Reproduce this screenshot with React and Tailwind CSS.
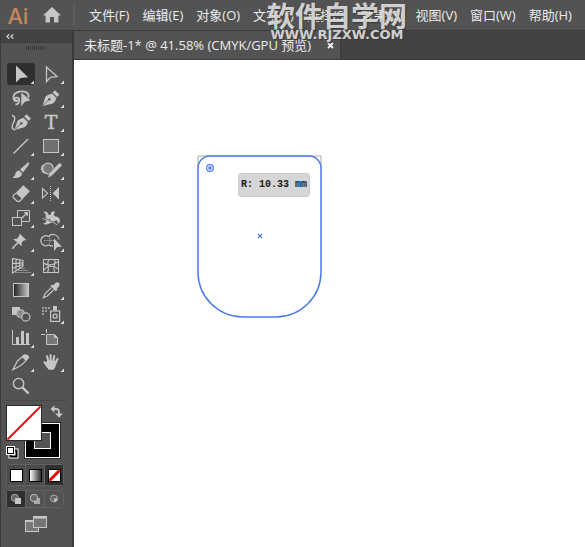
import React, { useState } from "react";

const INK = "#c6c6c6";

const menus = ["文件(F)", "编辑(E)", "对象(O)", "文字(T)", "选择(S)", "效果(C)", "视图(V)", "窗口(W)", "帮助(H)"];

const tools = [
  {
    id: "选择工具",
    more: true,
    art: <path fill={INK} d="M10 3.5V20.5L14.5 16L22 15.2Z" />,
  },
  {
    id: "直接选择工具",
    more: true,
    art: <path fill="none" stroke={INK} strokeWidth="1.3" d="M10.5 5V19.5L14.5 15.3L21 14.6Z" />,
  },
  {
    id: "套索工具",
    art: (
      <>
        <path
          fill="none"
          stroke={INK}
          strokeWidth="1.8"
          d="M9.5 18.5C13 18.5 14 15 13 12.8C12 11 8.6 11.4 8.6 13.4C8.6 15.4 11.6 15.6 11.6 13.6M8.8 15.2C6.5 12 7 8 11 6.3C16 4.3 22 5.4 22.6 9.3C22.8 10.5 22.3 11.3 21.8 12"
        />
        <path fill={INK} stroke="#535353" strokeWidth="0.6" d="M15 6V21L19 16L25 14.6Z" />
      </>
    ),
  },
  {
    id: "钢笔工具",
    more: true,
    art: (
      <>
        <path fill={INK} d="M6.5 20L9.5 10.5Q12 8.5 16 7.5L20.5 12Q19.5 15.5 17 17.5Z" />
        <path fill={INK} d="M16.6 6.6L19 4.2L23.3 8.5L21.2 10.9Z" />
        <path fill="none" stroke="#535353" strokeWidth="0.8" d="M7 19.5L13 13.5" />
        <circle cx="13.4" cy="13.2" r="1.2" fill="#535353" />
      </>
    ),
  },
  {
    id: "曲率工具",
    art: (
      <>
        <path fill="none" stroke={INK} strokeWidth="1.4" d="M6 5.5C10 6.5 9 10 7.3 13C5.5 16 5.5 19.5 9 19.8" />
        <path fill={INK} d="M8.5 20L11.5 10.8Q14 8.8 17.6 7.8L22 12.2Q21 15.5 18.5 17.3Z" />
        <path fill={INK} d="M18.2 6.6L20.6 4.2L24.9 8.5L22.8 10.9Z" />
        <path fill="none" stroke="#535353" strokeWidth="0.8" d="M9 19.5L15 13.5" />
        <circle cx="15.4" cy="13.2" r="1.2" fill="#535353" />
      </>
    ),
  },
  {
    id: "文字工具",
    more: true,
    art: (
      <text
        x="15"
        y="19"
        textAnchor="middle"
        fill={INK}
        stroke={INK}
        strokeWidth="0.5"
        fontSize="19"
        fontFamily="DejaVu Serif, serif"
      >
        T
      </text>
    ),
  },
  {
    id: "直线段工具",
    more: true,
    art: <path stroke={INK} strokeWidth="1.4" d="M7.5 19.5L22 5" />,
  },
  {
    id: "矩形工具",
    more: true,
    art: <rect x="7.5" y="5.5" width="15" height="13" fill="#707070" stroke={INK} />,
  },
  {
    id: "画笔工具",
    more: true,
    art: (
      <>
        <path fill={INK} d="M22.8 4.2Q24 5.2 22.4 7.2L17 14.4L14 11.6L21 5.2Q22 4.2 22.8 4.2Z" />
        <path fill={INK} d="M13.2 12.6L16 15.3Q16 18.5 12.5 19.5Q9.5 20.5 6.5 19.8Q9 18.5 9.3 16Q10 12.8 13.2 12.6Z" />
      </>
    ),
  },
  {
    id: "Shaper 工具",
    more: true,
    art: (
      <>
        <circle cx="12" cy="10.5" r="5.3" fill="#777777" stroke={INK} strokeWidth="1.2" />
        <path fill="none" stroke={INK} strokeWidth="1.2" d="M7.5 7C4.5 9 4.8 12.5 8.5 15.2" />
        <path fill={INK} stroke="#535353" strokeWidth="0.6" d="M22.6 5.4Q24.5 4.4 25.8 6.2Q26.4 7.3 25.4 8.3L15.8 18L11.5 20.2L13 15.4Z" />
      </>
    ),
  },
  {
    id: "橡皮擦工具",
    more: true,
    art: (
      <>
        <path fill={INK} d="M17.3 3.2L23.9 9.3L16.3 17.2L9.7 11Z" />
        <path fill="none" stroke={INK} strokeWidth="1.2" d="M9.6 11.2L7.2 13.8V15.5L11.2 19.3H13.6L16.2 16.8" />
      </>
    ),
  },
  {
    id: "镜像工具",
    more: true,
    art: (
      <>
        <path fill="none" stroke={INK} strokeWidth="1.1" d="M6.5 6.5V16L11.5 11.3Z" />
        <path stroke={INK} strokeWidth="1" strokeDasharray="1 1" d="M14.5 4V19" />
        <path fill={INK} d="M23 5V17.5L16.5 11.3Z" />
      </>
    ),
  },
  {
    id: "比例缩放工具",
    more: true,
    art: (
      <>
        <path fill="none" stroke={INK} d="M11.5 11.5V4.5H23.5V15.5H15.5" />
        <rect x="6.5" y="11.5" width="9" height="8" fill="none" stroke={INK} />
        <path stroke={INK} strokeWidth="1.2" d="M16 12L20.5 7.5" />
        <path fill={INK} d="M17.6 6H22V10.4Z" />
      </>
    ),
  },
  {
    id: "变形工具",
    more: true,
    art: (
      <>
        <path fill={INK} d="M7 6Q11 4.4 12 7.6Q12.6 10 14.6 8.4Q15.4 4.8 18.4 5.4Q20 6.4 18 7.6Q17.4 10 19.6 10.4Q22.6 10.4 23.8 13.4Q24.6 17 21.4 17.6Q22.6 14.6 20 14.4Q17 15.4 13.6 17.4Q9.4 19.6 6.8 17.6Q10 17 10.8 14.2Q8.8 12 9.8 8.4Q8.8 7 7 6Z" />
        <path stroke="#535353" strokeWidth="0.9" d="M8.5 12L18 16.5" />
        <path stroke={INK} strokeWidth="0.9" d="M6.5 12.5L11 14M16 15.5L21 18.8" />
        <circle cx="13.3" cy="14" r="1.3" fill="#535353" stroke={INK} strokeWidth="0.7" />
      </>
    ),
  },
  {
    id: "操控变形工具",
    more: true,
    art: (
      <>
        <path fill={INK} d="M13.6 3.6L20.2 10L17.8 10.6L15.6 12.8L15.8 16.2L7.2 9.2L10.8 8.8L13 6.2Z" />
        <path stroke={INK} strokeWidth="1.6" d="M11.5 13L6.2 18.8" />
      </>
    ),
  },
  {
    id: "形状生成器工具",
    more: true,
    art: (
      <>
        <path fill="none" stroke={INK} strokeWidth="1.2" d="M12.6 6.5A5 5 0 1 0 12.6 15M12.6 6.5A6 6 0 0 1 23 9.5M12.6 15Q15 16.4 17 15.6" />
        <path fill="none" stroke={INK} strokeWidth="0.8" strokeDasharray="1.2 1" d="M8 10.5H19M12.6 6.5Q16 10.5 12.6 15" />
        <path fill={INK} d="M18 8.5V21L21 17.2L25.8 16.4Z" />
      </>
    ),
  },
  {
    id: "透视网格工具",
    more: true,
    art: (
      <>
        <path fill="none" stroke={INK} strokeWidth="1.1" d="M6.5 4.5V19L17 12.5V6.5ZM10 5.5V16.8M13.6 6V14.6M6.5 9.4L17 8.6M6.5 14.2L17 10.6" />
        <path stroke="#8b8b8b" strokeWidth="1" d="M15 14.5H19M12 16.5H22M9 18.5H25" />
      </>
    ),
  },
  {
    id: "网格工具",
    art: (
      <>
        <rect x="7.5" y="5.5" width="15" height="13" fill="none" stroke={INK} />
        <path fill="none" stroke={INK} strokeWidth="1.1" d="M13 5.5C9.5 9.5 14.5 13 11.5 18.5M18.5 5.5C21 9.5 15.5 13 19 18.5M7.5 9Q13 13.5 22.5 7.5M7.5 16.5C12 11 17.5 11.5 22.5 15" />
      </>
    ),
  },
  {
    id: "渐变工具",
    art: <rect x="7.5" y="5.5" width="15" height="13" fill="url(#toolGradient)" stroke={INK} />,
  },
  {
    id: "吸管工具",
    more: true,
    art: (
      <>
        <path fill={INK} d="M18.4 6Q20.8 3.2 23 5Q24.6 7.2 22 9.4L20.8 10.6L21.6 11.6L19.8 13.2L14.4 8L16.2 6.4L17.2 7.2Z" />
        <path fill="none" stroke={INK} strokeWidth="1.2" d="M15.2 9.6L8.8 16L7.4 19.6L11 18.2L17.8 11.8" />
      </>
    ),
  },
  {
    id: "混合工具",
    art: (
      <>
        <rect x="6" y="5" width="8" height="8" fill={INK} />
        <circle cx="14.5" cy="11.5" r="4" fill="#8b8b8b" stroke={INK} />
        <circle cx="19.8" cy="15" r="4.1" fill="#535353" stroke={INK} strokeWidth="1.2" />
      </>
    ),
  },
  {
    id: "符号喷枪工具",
    more: true,
    art: (
      <>
        <path stroke="#a0a0a0" strokeWidth="2" strokeDasharray="2 1" d="M6 6H14M6 9H11M6 12H8" />
        <rect x="14.6" y="9" width="9" height="10.4" fill="none" stroke={INK} strokeWidth="1.2" />
        <rect x="17" y="4" width="4" height="4.4" fill={INK} />
        <circle cx="19.1" cy="14.2" r="2" fill="none" stroke={INK} strokeWidth="1.3" />
      </>
    ),
  },
  {
    id: "柱形图工具",
    more: true,
    art: (
      <>
        <path fill="none" stroke={INK} d="M6.5 4V18.5H24" />
        <path fill={INK} d="M10 11H13V18H10ZM15 5H18V18H15ZM20 7H23V18H20Z" />
      </>
    ),
  },
  {
    id: "画板工具",
    art: (
      <>
        <path fill="#777777" stroke={INK} d="M10.5 8.5H18.5L21.5 11.5V18.5H10.5Z" />
        <path stroke={INK} d="M10.5 3V7M5 8.5H9" />
        <path fill={INK} d="M18 8V12H22Z" />
      </>
    ),
  },
  {
    id: "切片工具",
    more: true,
    art: (
      <>
        <path fill="none" stroke={INK} strokeWidth="1.2" d="M6.8 19.6L11.5 11L16.5 6.6L20.2 10.4Q15 16.5 6.8 19.6Z" />
        <path fill={INK} d="M15.6 6.8L18 4.2Q22.6 4.2 23.4 7.6L20.6 10.8Z" />
      </>
    ),
  },
  {
    id: "抓手工具",
    more: true,
    art: (
      <>
        <path stroke={INK} strokeWidth="2.1" strokeLinecap="round" d="M11 6.2L12.6 12M14.6 5V12M18.2 6L17.2 12M21.4 9L19.2 14M8.4 12.2L12 16" />
        <path fill={INK} d="M11.5 10.5H18.8L20.4 13Q19.8 17 17.6 19.8H12.8Q10.6 17.4 8.6 14Z" />
      </>
    ),
  },
  {
    id: "缩放工具",
    art: (
      <>
        <circle cx="12.6" cy="9.6" r="5.2" fill="none" stroke={INK} strokeWidth="1.4" />
        <path stroke={INK} strokeWidth="2.4" d="M16.4 13.4L22.6 19.4" />
      </>
    ),
  },
];

function Tool({ tool, active, onClick }) {
  return (
    <button
      type="button"
      aria-label={tool.id}
      aria-pressed={active}
      onClick={onClick}
      className={"h-6 rounded-sm " + (active ? "bg-[#2f2f2f] bg-clip-content p-px" : "p-px")}
    >
      <svg viewBox="0 0 30 24" className="-m-px h-6 w-[30px]">
        {tool.art}
        {tool.more && <path fill="#dedede" d="M28 18.5V22H24.5Z" />}
      </svg>
    </button>
  );
}

function MenuBar() {
  return (
    <header className="flex h-[31px] items-center border-b border-[#3a3a3a] bg-[#535353] pl-2">
      <span className="w-[35px] font-['Open_Sans',sans-serif] text-[22px] leading-7 font-semibold text-[#c0855c]">Ai</span>
      <button type="button" aria-label="主页" className="shrink-0">
        <svg viewBox="0 0 18 16" className="h-4 w-[18px]" fill={INK}>
          <path d="M9 0L18 8.4H15.4V15.5H11V10H7V15.5H2.6V8.4H0Z" />
        </svg>
      </button>
      <span className="ml-3 h-5 w-0.5 shrink-0 bg-[#606060]" />
      <nav className="ml-[14px] flex gap-[13px] whitespace-nowrap">
        {menus.map((m) => (
          <button key={m} type="button" className="text-[13px] leading-4 text-[#ececec]">
            {m}
          </button>
        ))}
      </nav>
    </header>
  );
}

function Watermark() {
  return (
    <div className="pointer-events-none absolute top-0 left-[267px] text-center font-bold whitespace-nowrap text-[#e4e4e4]/90 text-shadow-[1px_1px_1px_#3a3a3a]">
      <div className="text-[28px] leading-8">软件自学网</div>
      <div className="font-['DejaVu_Sans',sans-serif] text-[13px] leading-[6px]">WWW.RJZXW.COM</div>
    </div>
  );
}

function FillStroke() {
  return (
    <svg viewBox="0 0 60 60" className="h-[60px] w-[60px]">
      <rect x="19.5" y="19.5" width="34" height="34" fill="#000" stroke="#fff" />
      <rect x="28.5" y="28.5" width="16" height="16" fill="#535353" stroke="#fff" />
      <rect x="18.5" y="18.5" width="36" height="36" fill="none" stroke="#2a2a2a" />
      <rect x="0.5" y="1.5" width="35" height="35" fill="#fff" stroke="#2a2a2a" />
      <path stroke="#e3101a" strokeWidth="2" d="M1.5 35.5L34.5 2.5" />
      <path fill="none" stroke={INK} strokeWidth="1.8" d="M48 5H50Q53 5 53 8V10" />
      <path fill={INK} d="M48.5 1.2V8.8L44.5 5ZM49.2 9.5H56.8L53 13.8Z" />
      <rect x="4.5" y="46.5" width="6" height="6" fill="none" stroke="#fff" strokeWidth="4" />
      <rect x="4.5" y="46.5" width="6" height="6" fill="none" stroke="#000" strokeWidth="2" />
      <rect x="0.5" y="42.5" width="8" height="8" fill="#fff" stroke="#fff" />
      <rect x="1.5" y="43.5" width="6" height="6" fill="#fff" stroke="#000" />
    </svg>
  );
}

function ColorModes() {
  const cell = "flex h-5 flex-1 items-center justify-center";
  return (
    <div className="flex gap-px rounded-sm border border-[#616161] bg-[#616161]">
      <button type="button" aria-label="颜色" className={cell + " bg-[#4b4b4b]"}>
        <span className="size-[13px] border border-black bg-white" />
      </button>
      <button type="button" aria-label="渐变" className={cell + " bg-[#4b4b4b]"}>
        <span className="size-[13px] border border-black bg-linear-to-r from-white to-[#333333]" />
      </button>
      <button type="button" aria-label="无" className={cell + " bg-[#2f2f2f]"}>
        <svg viewBox="0 0 13 13" className="size-[13px]">
          <rect x="0.5" y="0.5" width="12" height="12" fill="#fff" stroke="#000" />
          <path stroke="#f00000" strokeWidth="3" d="M1.5 11.5L11.5 1.5" />
        </svg>
      </button>
    </div>
  );
}

function DrawModes() {
  const cell = "flex h-4 flex-1 items-center justify-center";
  return (
    <div className="mt-1 flex gap-px rounded-sm border border-[#616161] bg-[#616161]">
      <button type="button" aria-label="正常绘图" className={cell + " bg-[#2f2f2f]"}>
        <svg viewBox="0 0 12 12" className="size-3">
          <circle cx="4.8" cy="4.8" r="3.6" fill="#666666" stroke="#a8a8a8" />
          <rect x="5" y="5" width="6" height="6" fill={INK} />
        </svg>
      </button>
      <button type="button" aria-label="背面绘图" className={cell + " bg-[#535353]"}>
        <svg viewBox="0 0 12 12" className="size-3">
          <rect x="5" y="5" width="6" height="6" fill="#a8a8a8" />
          <circle cx="5" cy="5" r="3.6" fill="#666666" stroke={INK} />
        </svg>
      </button>
      <button type="button" aria-label="内部绘图" className={cell + " bg-[#535353]"}>
        <svg viewBox="0 0 12 12" className="size-3">
          <circle cx="6" cy="5.5" r="3.5" fill="#666666" stroke="#a8a8a8" />
          <path fill={INK} d="M6 5.5H9.5Q9.2 8.5 6 9Z" />
        </svg>
      </button>
    </div>
  );
}

function Toolbox() {
  const [active, setActive] = useState("选择工具");
  return (
    <aside className="flex w-[74px] shrink-0 flex-col border-r-2 border-l border-[#3a3a3a] bg-[#535353]">
      <button type="button" aria-label="折叠" className="flex h-3 items-center border-b border-[#3a3a3a] bg-[#434343] pl-[5px]">
        <svg viewBox="0 0 8 5" className="h-[5px] w-2" fill="none" stroke="#d0d0d0" strokeWidth="1.3">
          <path d="M3.2 0.3L1 2.5L3.2 4.7M7.2 0.3L5 2.5L7.2 4.7" />
        </svg>
      </button>
      <svg viewBox="0 0 20 4" className="mt-[3px] ml-[25px] h-1 w-5">
        <path stroke="#363636" strokeWidth="4" strokeDasharray="1 1" d="M0 2H19" />
      </svg>
      <div className="mt-3 ml-[5px] grid w-[60px] grid-cols-2">
        {tools.map((t) => (
          <Tool key={t.id} tool={t} active={t.id === active} onClick={() => setActive(t.id)} />
        ))}
      </div>
      <div className="mx-[5px] mt-[2px] border-t border-[#484848] pt-[3px]">
        <FillStroke />
        <div className="w-[58px]">
          <ColorModes />
          <DrawModes />
        </div>
        <button type="button" aria-label="更改屏幕模式" className="mt-2 ml-[19px] block">
          <svg viewBox="0 0 22 16" className="h-4 w-[22px]">
            <rect x="0.5" y="4.5" width="13" height="11" fill="#777777" stroke={INK} />
            <path stroke={INK} strokeWidth="2" d="M0 5H14" />
            <rect x="8.5" y="0.5" width="13" height="11" fill="#777777" stroke={INK} />
            <path stroke={INK} strokeWidth="2" d="M8 1.5H22" />
          </svg>
        </button>
      </div>
    </aside>
  );
}

function Artboard() {
  return (
    <main className="relative flex-1 bg-white">
      <svg viewBox="0.5 0.5 126 164" className="absolute top-[95px] left-[123px] h-[164px] w-[126px]" fill="none">
        <path stroke="#a9a9a9" d="M1.5 14V1.5H124.5V14" />
        <path
          stroke="#4f7be8"
          strokeWidth="1.5"
          d="M1.5 13.5A12 12 0 0 1 13.5 1.5H112.5A12 12 0 0 1 124.5 13.5V117.5A45 45 0 0 1 79.5 162.5H46.5A45 45 0 0 1 1.5 117.5Z"
        />
        <circle cx="13.5" cy="13.5" r="3.4" stroke="#4f7be8" strokeWidth="1.2" />
        <circle cx="13.5" cy="13.5" r="1.8" fill="#4f7be8" />
        <path stroke="#4f7be8" strokeWidth="1.2" d="M61.5 79.5L65.5 83.5M65.5 79.5L61.5 83.5" />
      </svg>
      <div className="absolute top-[113px] left-[164px] rounded-[3px] border border-[#cbcbcb] bg-[#d6d6d6] px-[2px] font-['Liberation_Mono',monospace] text-[10px] leading-[22px] font-bold whitespace-nowrap text-[#1a1a1a]">
        R: 10.33 mm
      </div>
    </main>
  );
}

export default function App() {
  return (
    <div className="relative flex min-h-screen flex-col overflow-hidden bg-[#535353] font-['Open_Sans','Noto_Sans_CJK_SC',sans-serif]">
      <svg className="absolute size-0">
        <defs>
          <linearGradient id="toolGradient">
            <stop offset="0" stopColor="#1e1e1e" />
            <stop offset="1" stopColor="#c8c8c8" />
          </linearGradient>
        </defs>
      </svg>
      <MenuBar />
      <div className="flex flex-1">
        <Toolbox />
        <div className="flex min-w-0 flex-1 flex-col">
          <div className="flex h-[29px] border-b border-[#3a3a3a] bg-[#434343]">
            <div className="flex items-center gap-4 border-r border-[#3a3a3a] bg-[#535353] pr-[6px] pl-[10px] whitespace-nowrap">
              <span className="text-[13px] leading-4 text-[#ececec]">未标题-1* @ 41.58% (CMYK/GPU 预览)</span>
              <button type="button" aria-label="关闭">
                <svg viewBox="0 0 7 7" className="size-[7px]" stroke="#f0f0f0" strokeWidth="1.8">
                  <path d="M1 1L6 6M6 1L1 6" />
                </svg>
              </button>
            </div>
          </div>
          <Artboard />
        </div>
      </div>
      <Watermark />
    </div>
  );
}
